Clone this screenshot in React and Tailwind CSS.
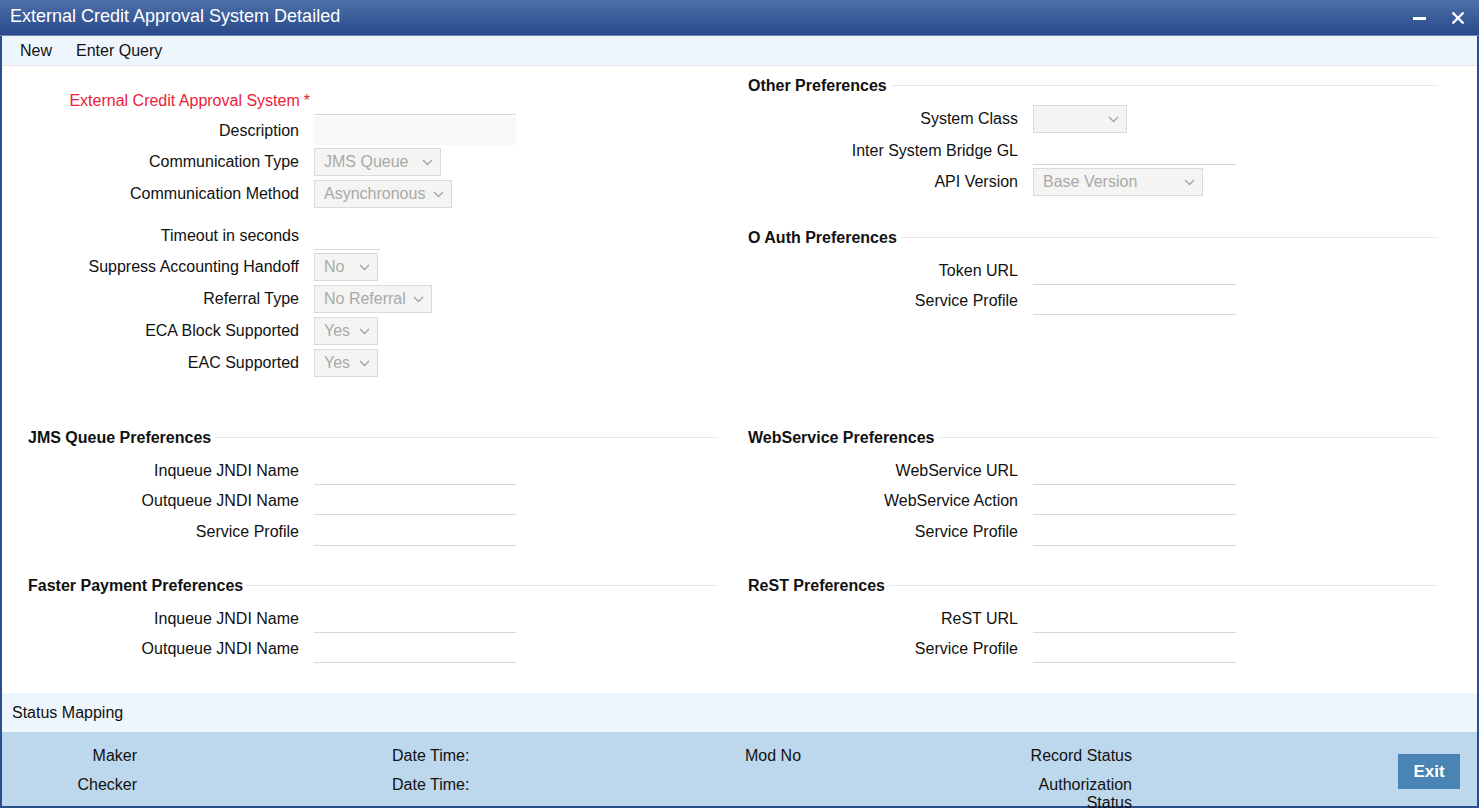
import React from 'react';

const font = { fontFamily: '"Liberation Sans", Arial, sans-serif' };

function Chevron() {
  return (
    <svg width="11" height="7" viewBox="0 0 11 7" className="shrink-0">
      <polyline points="1,1 5.5,5.5 10,1" fill="none" stroke="#a3a3a3" strokeWidth="1.3" />
    </svg>
  );
}

function Select({ value, className }) {
  return (
    <div className={`flex items-center justify-between h-[28px] border border-[#dadada] bg-[#f4f4f2] pl-[9px] pr-[7px] text-[#a9a9a9] ${className}`}>
      <span className="whitespace-nowrap">{value}</span>
      <Chevron />
    </div>
  );
}

function Line({ className = 'w-[202px]' }) {
  return <div className={`h-[28px] border-b border-[#d7d7d7] ${className}`} />;
}

function Row({ label, children, h = 'h-[30px]', red, lw = 'w-[271px]' }) {
  return (
    <div className={`flex items-center gap-[15px] ${h}`}>
      <div className={`${lw} shrink-0 text-right whitespace-nowrap ${red ? 'text-[#ec1c3a]' : 'text-[#111]'}`}>
        {label}
      </div>
      {children}
    </div>
  );
}

function Heading({ children, className = '' }) {
  return (
    <div className={`flex items-center h-[20px] ${className}`}>
      <span className="font-bold text-[#111] whitespace-nowrap pr-[4px]">{children}</span>
      <div className="flex-1 h-px bg-[#e9e9e9] -mt-[2px]" />
    </div>
  );
}

export default function App() {
  return (
    <div className="w-[1479px] h-[812px] bg-white text-[16px]" style={font}>
      <div className="h-[808px] border-2 border-t-0 border-[#2a4f8f] flex flex-col">
        {/* title bar */}
        <div className="h-[36px] -mx-[2px] pl-[10px] pr-[12px] flex items-center justify-between bg-gradient-to-b from-[#4d70a9] to-[#29498a] border-b border-[#6d87b2]">
          <span className="text-white text-[18px] -mt-[2px]">External Credit Approval System Detailed</span>
          <div className="flex items-center gap-[25px] pr-[2px]">
            <svg width="13" height="14" viewBox="0 0 13 14">
              <rect x="0" y="6" width="13" height="3" fill="#fff" />
            </svg>
            <svg width="14" height="14" viewBox="0 0 14 14">
              <path d="M1.5 1.5 L12.5 12.5 M12.5 1.5 L1.5 12.5" stroke="#fff" strokeWidth="2.4" />
            </svg>
          </div>
        </div>

        {/* toolbar */}
        <div className="h-[30px] bg-[#eef5fd] border-b border-[#e4e8ee] flex items-center gap-[24px] pl-[18px] text-[#111]">
          <span>New</span>
          <span>Enter Query</span>
        </div>

        {/* body */}
        <div className="flex-1 pl-[26px] pr-[39px]">
          <div className="grid grid-cols-[690px_690px] gap-x-[30px]">
            {/* left main */}
            <div className="pt-[20px] flex flex-col">
              <Row label={<>External Credit Approval System<span className="inline-block ml-[4px] -mr-[11px]">*</span></>} red>
                <Line />
              </Row>
              <Row label="Description">
                <div className="w-[202px] h-[28px] bg-[#f8f8f8]" />
              </Row>
              <Row label="Communication Type" h="h-[32px]">
                <Select value="JMS Queue" className="w-[127px]" />
              </Row>
              <Row label="Communication Method" h="h-[32px]">
                <Select value="Asynchronous" className="w-[138px]" />
              </Row>
              <div className="h-[11px]" />
              <Row label="Timeout in seconds">
                <Line className="w-[66px]" />
              </Row>
              <Row label="Suppress Accounting Handoff" h="h-[32px]">
                <Select value="No" className="w-[64px]" />
              </Row>
              <Row label="Referral Type" h="h-[32px]">
                <Select value="No Referral" className="w-[118px]" />
              </Row>
              <Row label="ECA Block Supported" h="h-[32px]">
                <Select value="Yes" className="w-[64px]" />
              </Row>
              <Row label="EAC Supported" h="h-[32px]">
                <Select value="Yes" className="w-[64px]" />
              </Row>
            </div>

            {/* right main */}
            <div className="pt-[10px] flex flex-col">
              <Heading>Other Preferences</Heading>
              <div className="h-[7px]" />
              <Row label="System Class" h="h-[32px]" lw="w-[270px]">
                <Select value="" className="w-[94px]" />
              </Row>
              <Row label="Inter System Bridge GL" h="h-[32px]" lw="w-[270px]">
                <Line className="w-[203px]" />
              </Row>
              <Row label="API Version" lw="w-[270px]">
                <Select value="Base Version" className="w-[170px]" />
              </Row>
              <Heading className="mt-[31px]">O Auth Preferences</Heading>
              <div className="h-[8px]" />
              <Row label="Token URL" lw="w-[270px]">
                <Line className="w-[203px]" />
              </Row>
              <Row label="Service Profile" lw="w-[270px]">
                <Line className="w-[203px]" />
              </Row>
            </div>

            {/* JMS */}
            <div className="mt-[49px] flex flex-col">
              <Heading>JMS Queue Preferences</Heading>
              <div className="h-[8px]" />
              <Row label="Inqueue JNDI Name"><Line /></Row>
              <Row label="Outqueue JNDI Name"><Line /></Row>
              <Row label="Service Profile" h="h-[31px]"><Line /></Row>
            </div>

            {/* WebService */}
            <div className="mt-[49px] flex flex-col">
              <Heading>WebService Preferences</Heading>
              <div className="h-[8px]" />
              <Row label="WebService URL" lw="w-[270px]"><Line className="w-[203px]" /></Row>
              <Row label="WebService Action" lw="w-[270px]"><Line className="w-[203px]" /></Row>
              <Row label="Service Profile" h="h-[31px]" lw="w-[270px]"><Line className="w-[203px]" /></Row>
            </div>

            {/* Faster Payment */}
            <div className="mt-[29px] flex flex-col">
              <Heading>Faster Payment Preferences</Heading>
              <div className="h-[8px]" />
              <Row label="Inqueue JNDI Name"><Line /></Row>
              <Row label="Outqueue JNDI Name"><Line /></Row>
            </div>

            {/* ReST */}
            <div className="mt-[29px] flex flex-col">
              <Heading>ReST Preferences</Heading>
              <div className="h-[8px]" />
              <Row label="ReST URL" lw="w-[270px]"><Line className="w-[203px]" /></Row>
              <Row label="Service Profile" lw="w-[270px]"><Line className="w-[203px]" /></Row>
            </div>
          </div>
        </div>

        {/* status mapping */}
        <div className="h-[39px] bg-[#eef5fd] flex items-center pl-[10px] text-[#111]">
          Status Mapping
        </div>

        {/* footer */}
        <div className="h-[74px] bg-[#bdd8ed] flex text-[#111] leading-[18px]">
          <div className="w-[135px] shrink-0 pt-[15px] flex flex-col gap-[11px] text-right">
            <span>Maker</span>
            <span>Checker</span>
          </div>
          <div className="w-[255px] shrink-0" />
          <div className="w-[353px] shrink-0 pt-[15px] flex flex-col gap-[11px]">
            <span>Date Time:</span>
            <span>Date Time:</span>
          </div>
          <div className="w-[287px] shrink-0 pt-[15px]">
            <span>Mod No</span>
          </div>
          <div className="w-[100px] shrink-0 pt-[15px] flex flex-col items-end gap-[11px] text-right">
            <span className="whitespace-nowrap">Record Status</span>
            <span>Authorization Status</span>
          </div>
          <div className="flex-1 flex justify-end items-start pt-[22px] pr-[17px]">
            <button className="w-[62px] h-[35px] bg-[#4a84b4] text-white font-bold text-[17px]">Exit</button>
          </div>
        </div>
      </div>
    </div>
  );
}
